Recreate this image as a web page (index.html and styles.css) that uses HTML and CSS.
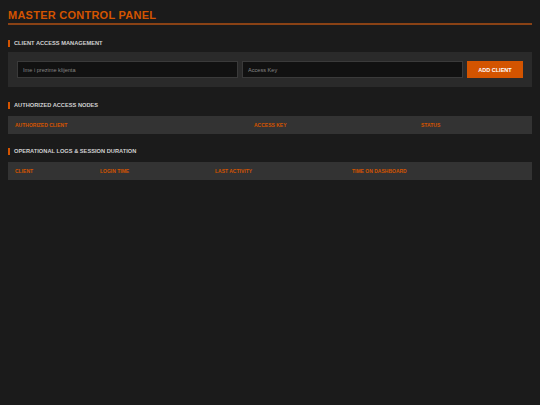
FILE: index.html
```html
<!DOCTYPE html>
<html>
<head>
<meta charset="utf-8">
<link rel="stylesheet" href="styles.css">
</head>
<body>
<div class="page">
  <h1 class="title">MASTER CONTROL PANEL</h1>

  <h2 class="section-title">CLIENT ACCESS MANAGEMENT</h2>
  <div class="panel">
    <input class="field field-name" type="text" placeholder="Ime i prezime klijenta">
    <input class="field field-key" type="text" placeholder="Access Key">
    <button class="btn">ADD CLIENT</button>
  </div>

  <h2 class="section-title">AUTHORIZED ACCESS NODES</h2>
  <table class="grid grid-nodes">
    <thead>
      <tr><th class="c1">AUTHORIZED CLIENT</th><th class="c2">ACCESS KEY</th><th class="c3">STATUS</th></tr>
    </thead>
    <tbody></tbody>
  </table>

  <h2 class="section-title">OPERATIONAL LOGS &amp; SESSION DURATION</h2>
  <table class="grid grid-logs">
    <thead>
      <tr><th class="l1">CLIENT</th><th class="l2">LOGIN TIME</th><th class="l3">LAST ACTIVITY</th><th class="l4">TIME ON DASHBOARD</th></tr>
    </thead>
    <tbody></tbody>
  </table>
</div>
</body>
</html>
```
FILE: styles.css
```css
html, body {
  margin: 0;
  padding: 0;
  background: #1b1b1b;
}
body {
  font-family: "Liberation Sans", Arial, sans-serif;
  color: #cccccc;
}
.page {
  padding: 8px;
}
.title {
  margin: 0;
  font-size: 11px;
  font-weight: bold;
  letter-spacing: 0.25px;
  color: #d35400;
  line-height: 14px;
  padding-top: 0;
  padding-bottom: 1px;
  border-bottom: 2px solid #8a4215;
}
.section-title {
  margin: 15px 0 0 0;
  font-size: 5.7px;
  font-weight: bold;
  letter-spacing: 0;
  color: #d0d0d0;
  line-height: 7px;
  border-left: 2px solid #d35400;
  padding-left: 4px;
}
.grid + .section-title {
  margin-top: 14.5px;
}
.panel {
  margin-top: 5px;
  background: #2a2a2a;
  padding: 9px;
  display: flex;
  gap: 4px;
  align-items: stretch;
}
.field {
  flex: 1;
  height: 17px;
  box-sizing: border-box;
  background: #111111;
  border: 1px solid #3a3a3a;
  color: #cccccc;
  font-family: "Liberation Sans", Arial, sans-serif;
  font-size: 5.6px;
  padding: 0 5px;
  margin: 0;
  outline: none;
}
.field::placeholder {
  color: #858585;
}
.btn {
  width: 56px;
  height: 17px;
  box-sizing: border-box;
  background: #d35400;
  border: none;
  color: #ffffff;
  font-family: "Liberation Sans", Arial, sans-serif;
  font-size: 5.5px;
  font-weight: bold;
  margin: 0;
  padding: 0;
}
.grid {
  margin-top: 6.5px;
  width: 100%;
  border-collapse: collapse;
  table-layout: fixed;
}
.grid th {
  background: #333333;
  color: #d35400;
  font-size: 5px;
  font-weight: bold;
  text-align: left;
  padding: 0 7px;
  height: 18px;
}
.grid-nodes .c1 { width: 225px; }
.grid-nodes .c2 { width: 153px; }
.grid-logs .l1 { width: 71px; }
.grid-logs .l2 { width: 101px; }
.grid-logs .l3 { width: 123px; }
```
